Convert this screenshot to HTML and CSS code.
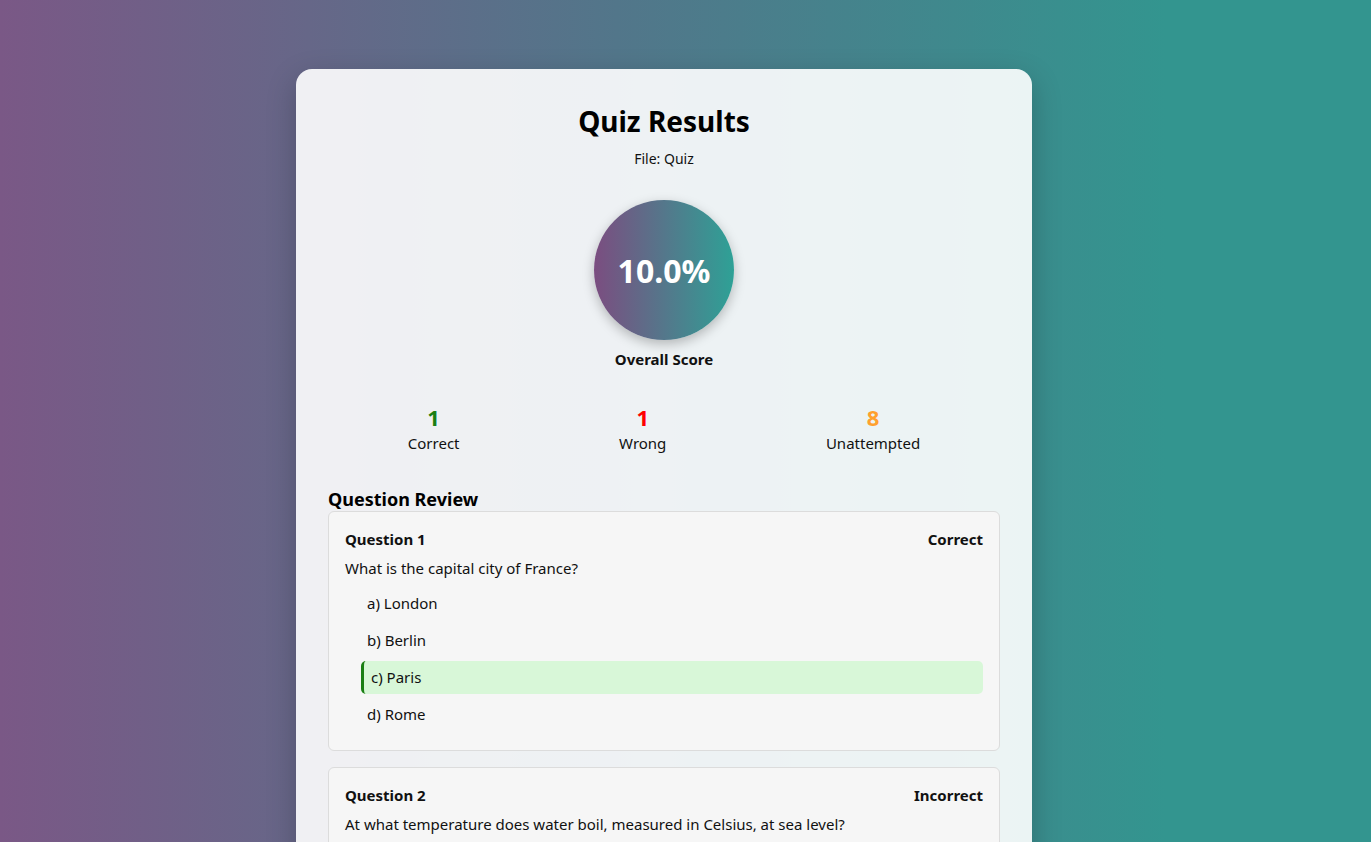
FILE: index.html
```html
<!DOCTYPE html>
<html lang="en">
<head>
<meta charset="utf-8">
<title>Quiz Results</title>
<link rel="stylesheet" href="styles.css">
</head>
<body>
<main class="card">
  <h1 class="title">Quiz Results</h1>
  <p class="file">File: Quiz</p>
  <div class="score">
    <div class="score-circle">10.0%</div>
    <div class="score-label">Overall Score</div>
  </div>
  <div class="stats">
    <div class="stat"><div class="stat-num green">1</div><div class="stat-label">Correct</div></div>
    <div class="stat"><div class="stat-num red">1</div><div class="stat-label">Wrong</div></div>
    <div class="stat"><div class="stat-num orange">8</div><div class="stat-label">Unattempted</div></div>
  </div>
  <h2 class="review-title">Question Review</h2>
  <section class="question">
    <div class="q-head"><span>Question 1</span><span>Correct</span></div>
    <p class="q-text">What is the capital city of France?</p>
    <ul class="options">
      <li class="opt">a) London</li>
      <li class="opt">b) Berlin</li>
      <li class="opt opt-correct">c) Paris</li>
      <li class="opt">d) Rome</li>
    </ul>
  </section>
  <section class="question">
    <div class="q-head"><span>Question 2</span><span>Incorrect</span></div>
    <p class="q-text">At what temperature does water boil, measured in Celsius, at sea level?</p>
    <ul class="options">
      <li class="opt">a) 90</li>
      <li class="opt opt-correct">b) 100</li>
      <li class="opt opt-wrong">c) 110</li>
      <li class="opt">d) 120</li>
    </ul>
  </section>
</main>
</body>
</html>
```
FILE: styles.css
```css
html, body {
  margin: 0;
  padding: 0;
}
body {
  min-height: 100vh;
  background: linear-gradient(to right, #7a5886 0%, #52768a 45%, #33958f 85%, #33958f 100%);
  background-attachment: fixed;
  font-family: "Segoe UI", "Noto Sans", "Liberation Sans", sans-serif;
  color: #111;
  padding: 69px 43px 40px 0;
  box-sizing: border-box;
}
.card {
  width: 736px;
  margin: 0 auto;
  box-sizing: border-box;
  padding: 32px;
  background: rgba(255, 255, 255, 0.9);
  border-radius: 16px;
  box-shadow: 0 10px 30px rgba(0, 0, 0, 0.22);
}
.title {
  margin: 0;
  text-align: center;
  font-size: 28px;
  line-height: 40px;
  font-weight: 700;
  color: #000;
}
.file {
  margin: 7px 0 0;
  text-align: center;
  font-size: 14px;
  line-height: 22px;
}
.score {
  margin-top: 30px;
  display: flex;
  flex-direction: column;
  align-items: center;
}
.score-circle {
  width: 140px;
  height: 140px;
  border-radius: 50%;
  background: linear-gradient(to right, #7b4d80, #2ea196);
  box-shadow: 0 4px 12px rgba(0, 0, 0, 0.25);
  display: flex;
  align-items: center;
  justify-content: center;
  color: #fff;
  font-size: 32px;
  font-weight: 700;
}
.score-label {
  margin-top: 8px;
  font-size: 15px;
  line-height: 22px;
  font-weight: 700;
}
.stats {
  display: flex;
  justify-content: space-around;
  margin-top: 34px;
}
.stat {
  text-align: center;
}
.stat-num {
  font-size: 22px;
  line-height: 26px;
  font-weight: 700;
}
.stat-label {
  font-size: 15px;
  line-height: 22px;
  margin-top: 2px;
}
.green { color: #1a7f14; }
.red { color: #ff0000; }
.orange { color: #ffa02e; }
.review-title {
  margin: 34px 0 0;
  font-size: 18px;
  line-height: 22px;
  font-weight: 700;
  color: #000;
}
.question {
  margin-top: 1px;
  margin-bottom: 16px;
  padding: 16px 16px 19px;
  background: #f6f6f6;
  border: 1px solid #dcdcdc;
  border-radius: 6px;
}
.q-head {
  display: flex;
  justify-content: space-between;
  font-size: 15px;
  line-height: 22px;
  font-weight: 700;
}
.q-text {
  margin: 7px 0 8px;
  font-size: 15px;
  line-height: 22px;
}
.options {
  list-style: none;
  margin: 0;
  padding: 0 0 0 16px;
}
.opt {
  margin: 4px 0 0;
  padding: 6px 6px;
  font-size: 15px;
  line-height: 21px;
  border-radius: 5px;
}
.opt-correct {
  background: #d8f7d8;
  border-left: 3px solid #1a7f14;
  padding-left: 7px;
}
.opt-wrong {
  background: #fbdada;
  border-left: 3px solid #e00000;
  padding-left: 7px;
}
```
